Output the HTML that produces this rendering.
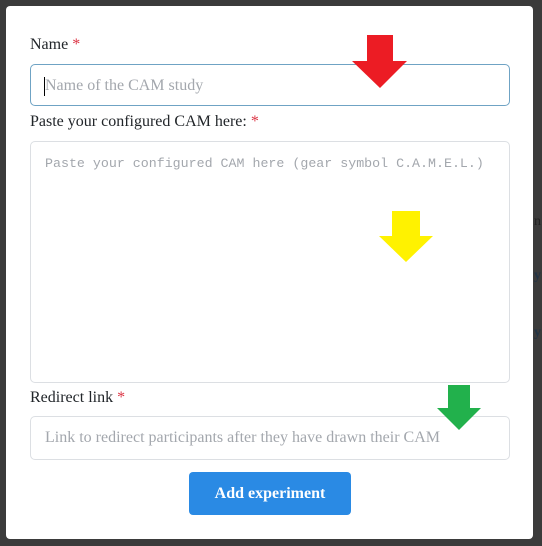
<!DOCTYPE html>
<html><head><style>
*{font-family:"Liberation Serif","Times New Roman","DejaVu Serif",serif;}
body{margin:0;width:542px;height:546px;background:#3b3b3b;position:relative;overflow:hidden;}
.m{position:absolute;left:6px;top:6px;width:527px;height:533px;background:#fff;border-radius:4px;}
.l{position:absolute;left:30px;font-size:16px;color:#212529;}
.l span{color:#dc3545;}
.f{position:absolute;left:30px;width:480px;border:1px solid #ced4da;border-radius:5px;color:#a3a7ad;font-size:16px;box-sizing:border-box;}
.btn{position:absolute;left:189px;top:472px;width:162px;height:43px;background:#2a8ae4;border-radius:4px;color:#fff;font-weight:bold;font-size:16px;text-align:center;line-height:43px;}
.mono{font-family:"Liberation Mono","DejaVu Sans Mono",monospace;}
svg{position:absolute;left:0;top:0}
</style></head><body>
<div style="position:absolute;left:534px;top:214px;color:#222;font-size:14px">n</div>
<div style="position:absolute;left:534px;top:268px;color:#234;font-weight:bold;font-size:14px">y</div>
<div style="position:absolute;left:534px;top:325px;color:#234;font-weight:bold;font-size:14px">y</div>
<div class="m"></div>
<div class="l" style="top:36px">Name <span>*</span></div>
<div class="f" style="top:64px;height:42px;border-color:#6fa3c4;padding:12px 0 0 14px">Name of the CAM study<div style="position:absolute;left:13px;top:12px;width:1px;height:19px;background:#000"></div></div>
<div class="l" style="top:113px">Paste your configured CAM here: <span>*</span></div>
<div class="f mono" style="top:141px;height:242px;padding:14px 0 0 14px;font-size:13.3px;border-color:#dcdfe3">Paste your configured CAM here (gear symbol C.A.M.E.L.)</div>
<div class="l" style="top:389px">Redirect link <span>*</span></div>
<div class="f" style="top:416px;height:44px;padding:12px 0 0 14px;border-color:#dcdfe3">Link to redirect participants after they have drawn their CAM</div>
<div class="btn">Add experiment</div>
<svg width="542" height="546">
<polygon points="367,35 393,35 393,61 407,61 380,88 352,61 367,61" fill="#ec1c24"/>
<polygon points="392,211 420,211 420,236 433,236 406,262 379,236 392,236" fill="#fff200"/>
<polygon points="448,385 470,385 470,408 481,408 459,430 437,408 448,408" fill="#22b14c"/>
</svg>
</body></html>
